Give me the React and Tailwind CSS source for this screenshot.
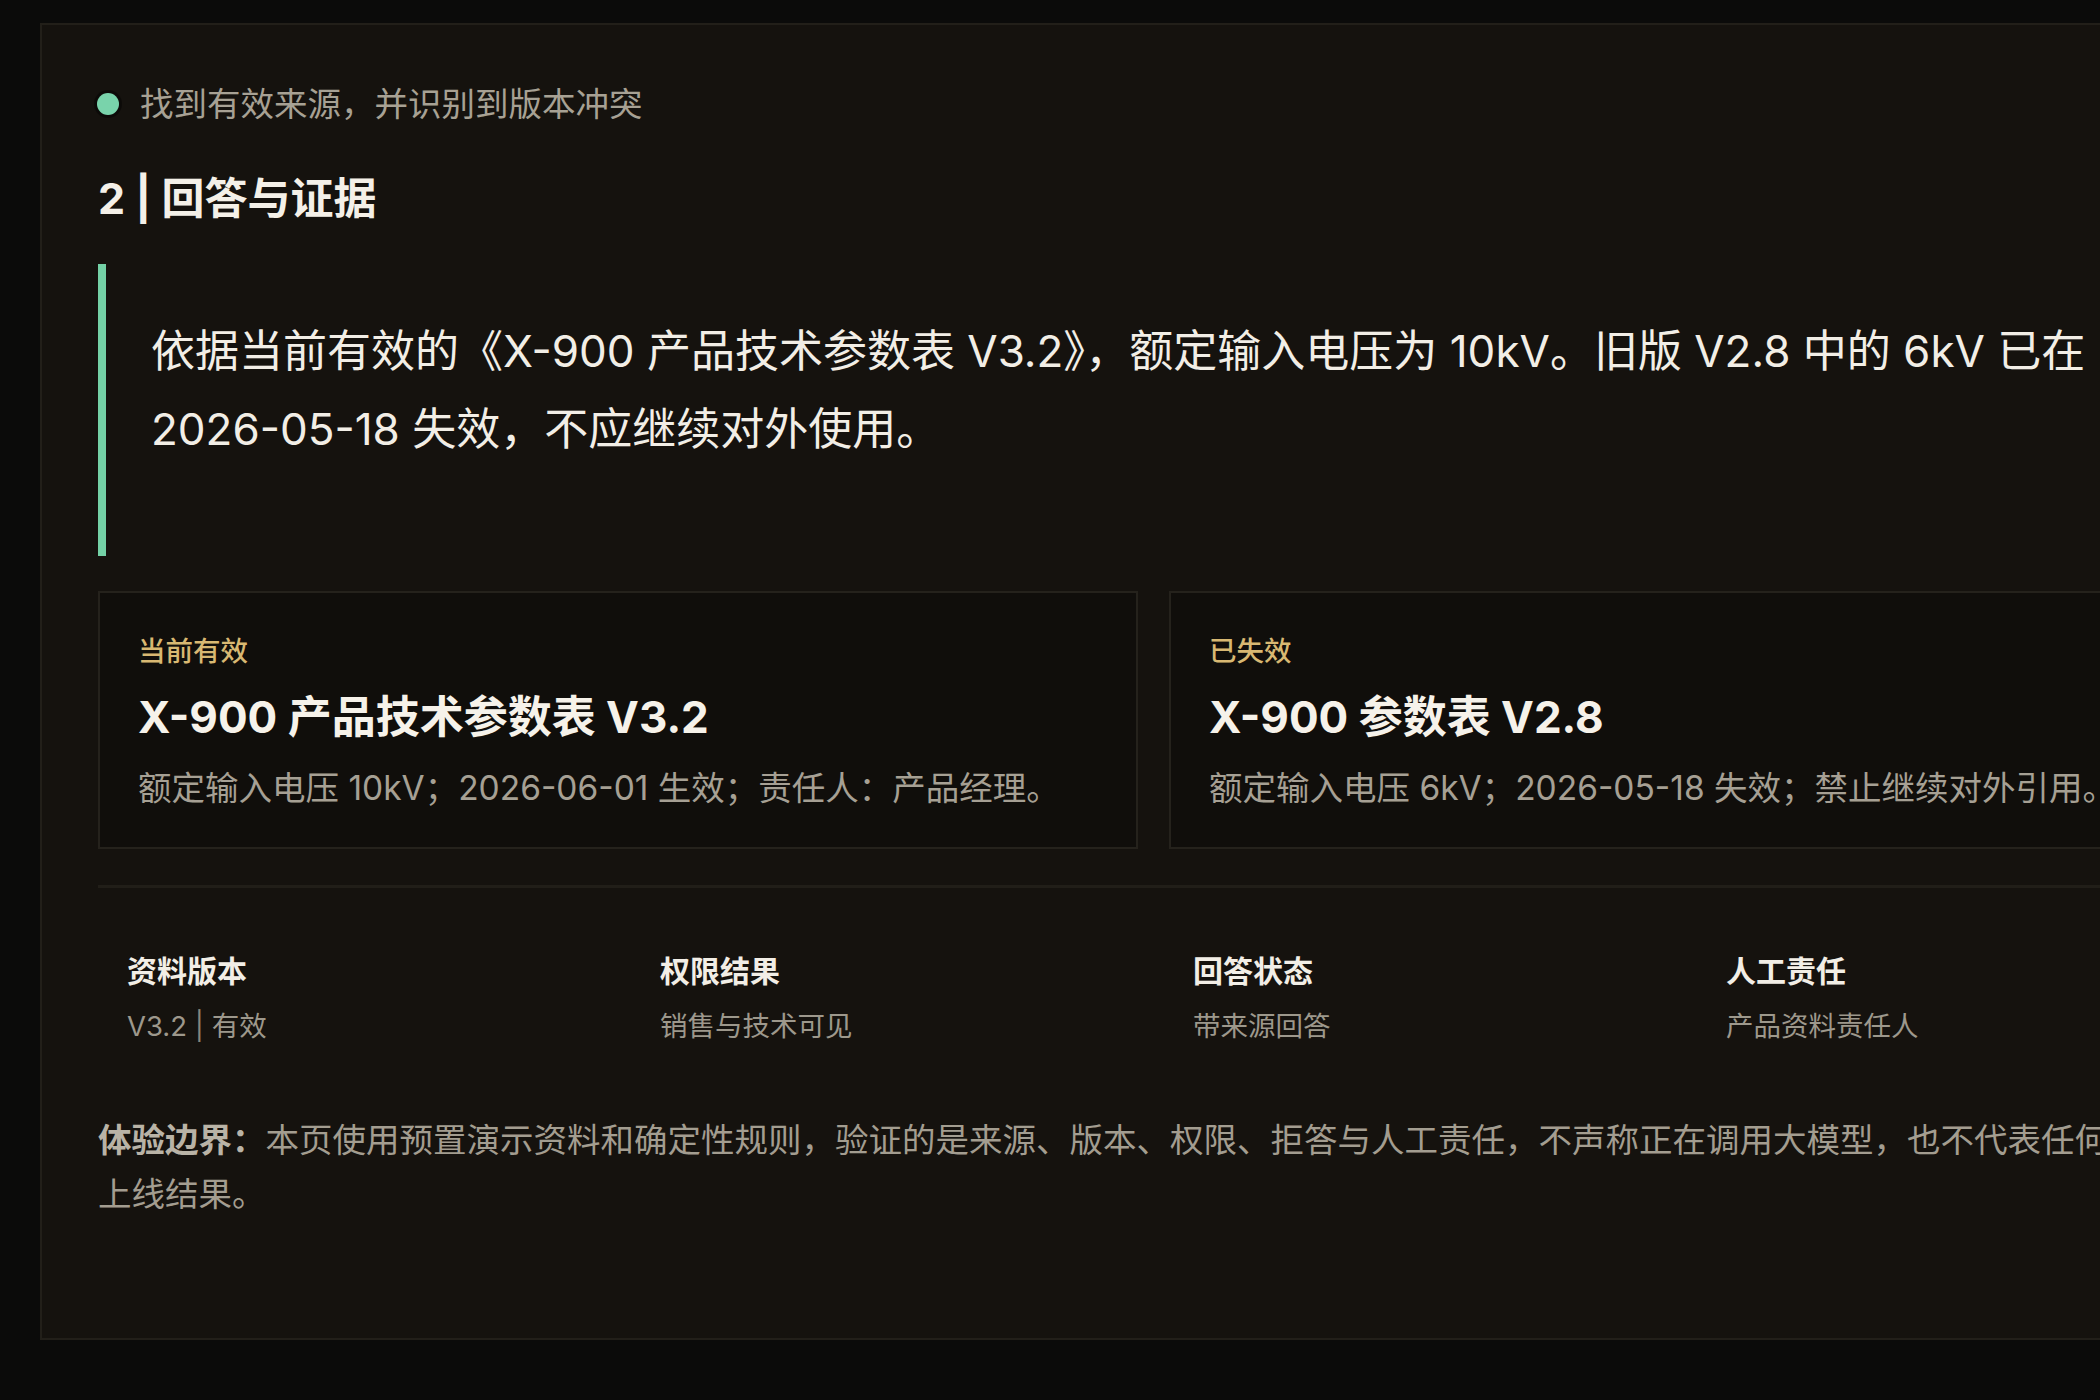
export default function App() {
  const stats = [
    { label: "资料版本", value: (<>V3.2 <span className="text-[#8a857a]">|</span> 有效</>) },
    { label: "权限结果", value: "销售与技术可见" },
    { label: "回答状态", value: "带来源回答" },
    { label: "人工责任", value: "产品资料责任人" },
  ];
  return (
    <div className="w-[2100px] h-[1400px] overflow-hidden bg-[#0b0b0a] pl-[40px] pt-[23px] font-['Inter','Noto_Sans_CJK_SC',sans-serif]">
      <div className="w-[2227px] h-[1317px] border-2 border-[#221f19] bg-[#15120e] pl-[56px] pr-[56px] pt-[57px]">
        <div className="flex items-center h-[44px]">
          <span className="w-[22px] h-[22px] rounded-full bg-[#79d3ab] ring-[3px] ring-black/40 ml-[-1px]"></span>
          <span className="ml-[21px] text-[33.5px] leading-[44px] text-[#a7a194]">找到有效来源，并识别到版本冲突</span>
        </div>
        <h2 className="mt-[44px] text-[43px] leading-[56px] font-bold text-[#f4f0e8]">2 | 回答与证据</h2>
        <div className="mt-[38px] border-l-[8px] border-[#74d1a6] pl-[45px] pt-[48px] pb-[88px]">
          <p className="text-[44px] leading-[78px] text-[#f2eee6]">
            依据当前有效的《X-900 产品技术参数表 V3.2》，额定输入电压为 10kV。旧版 V2.8 中的 6kV 已在 <span className="whitespace-nowrap">2026-05-18</span> 失效，不应继续对外使用。
          </p>
        </div>
        <div className="mt-[35px] grid grid-cols-2 gap-[31px]">
          <div className="h-[258px] border-2 border-[#25221c] bg-[#100e0b] px-[38px] pt-[40px]">
            <div className="text-[27.5px] leading-[36px] font-medium text-[#d8b872]">当前有效</div>
            <div className="mt-[20px] text-[44px] leading-[56px] font-bold text-[#f6f2ea]">X-900 产品技术参数表 V3.2</div>
            <div className="mt-[21px] text-[33.5px] leading-[44px] text-[#a6a094] whitespace-nowrap">额定输入电压 10kV；2026-06-01 生效；责任人：产品经理。</div>
          </div>
          <div className="h-[258px] border-2 border-[#25221c] bg-[#100e0b] px-[38px] pt-[40px]">
            <div className="text-[27.5px] leading-[36px] font-medium text-[#d8b872]">已失效</div>
            <div className="mt-[20px] text-[44px] leading-[56px] font-bold text-[#f6f2ea]">X-900 参数表 V2.8</div>
            <div className="mt-[21px] text-[33.5px] leading-[44px] text-[#a6a094] whitespace-nowrap">额定输入电压 6kV；2026-05-18 失效；禁止继续对外引用。</div>
          </div>
        </div>
        <div className="mt-[36px] h-[3px] bg-[#211e18]"></div>
        <div className="mt-[63px] grid grid-cols-4 gap-[21px]">
          {stats.map((s) => (
            <div key={s.label} className="px-[29px]">
              <div className="text-[30px] leading-[40px] font-bold text-[#f2eee6]">{s.label}</div>
              <div className="mt-[17px] text-[27.5px] leading-[36px] text-[#9d988c]">{s.value}</div>
            </div>
          ))}
        </div>
        <p className="mt-[69px] text-[33.5px] leading-[54px] text-[#a39d90]">
          <span className="font-semibold text-[#b9b3a6]">体验边界：</span>本页使用预置演示资料和确定性规则，验证的是来源、版本、权限、拒答与人工责任，不声称正在调用大模型，也不代表任何真实<br />上线结果。
        </p>
      </div>
    </div>
  );
}
